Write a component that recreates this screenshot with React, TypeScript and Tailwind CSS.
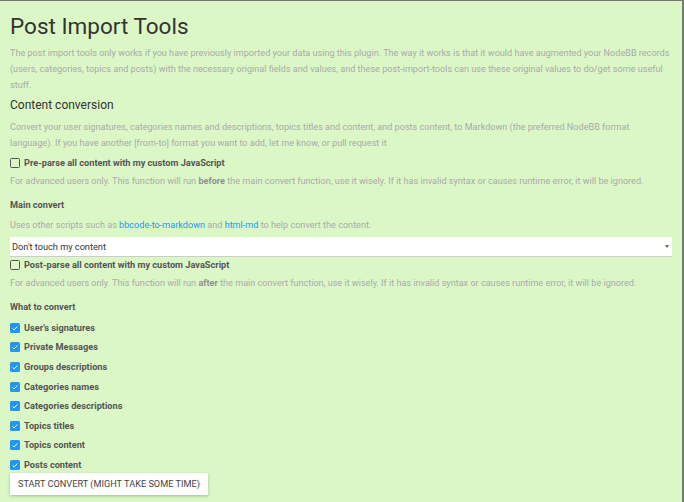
import React from 'react';

const options = [
  "User's signatures",
  'Private Messages',
  'Groups descriptions',
  'Categories names',
  'Categories descriptions',
  'Topics titles',
  'Topics content',
  'Posts content',
];

function Box({ checked }: { checked?: boolean }) {
  if (checked) {
    return (
      <span className="flex h-[10px] w-[10px] shrink-0 items-center justify-center rounded-[1.5px] bg-[#2196f3]">
        <svg width="8" height="8" viewBox="0 0 8 8" fill="none">
          <path d="M1.6 4.5 L3.2 5.9 L6.3 2.5" stroke="white" strokeWidth="1" />
        </svg>
      </span>
    );
  }
  return <span className="h-[10px] w-[10px] shrink-0 rounded-[1.5px] border border-[#555]" />;
}

function CheckRow({ label, checked, h = 'h-[19.6px]' }: { label: string; checked?: boolean; h?: string }) {
  return (
    <label className={`flex ${h} items-center gap-[4px] text-[9.2px] font-bold text-[#555]`}>
      <Box checked={checked} />
      <span>{label}</span>
    </label>
  );
}

export default function App() {
  return (
    <div
      className="h-[502px] w-[684px] overflow-hidden border-t border-r-2 border-[#777] bg-[#dbf7c6] pl-[10px] pr-[9px] pt-[10px]"
      style={{ fontFamily: 'Roboto, "Liberation Sans", sans-serif' }}
    >
      <h1 className="text-[22.5px] leading-[30px] text-[#333]">Post Import Tools</h1>
      <p className="mt-[4px] text-[9.1px] leading-[16px] text-[#aaa]">
        The post import tools only works if you have previously imported your data using this plugin. The way it works is that it would have augmented your NodeBB records (users, categories, topics and posts) with the necessary original fields and values, and these post-import-tools can use these original values to do/get some useful stuff.
      </p>
      <h2 className="mt-[2px] text-[12px] leading-[20px] text-[#333]">Content conversion</h2>
      <p className="mt-[4px] pr-[10px] text-[9.1px] leading-[16px] text-[#aaa]">
        Convert your user signatures, categories names and descriptions, topics titles and content, and posts content, to Markdown (the preferred NodeBB format language). If you have another [from-to] format you want to add, let me know, or pull request it
      </p>
      <div className="mt-[2px]">
        <CheckRow label="Pre-parse all content with my custom JavaScript" h="h-[20px]" />
      </div>
      <p className="text-[9.1px] leading-[16px] text-[#aaa]">
        For advanced users only. This function will run <b className="text-[#909090]">before</b> the main convert function, use it wisely. If it has invalid syntax or causes runtime error, it will be ignored.
      </p>
      <div className="mt-[8px] text-[9.2px] font-bold leading-[16px] text-[#555]">Main convert</div>
      <p className="mt-[4px] text-[9.1px] leading-[16px] text-[#aaa]">
        Uses other scripts such as <span className="text-[#2196f3]">bbcode-to-markdown</span> and{' '}
        <span className="text-[#2196f3]">html-md</span> to help convert the content.
      </p>
      <div className="mt-[4px] mr-[1px] flex h-[20px] items-center justify-between border-b border-[#ccc] bg-white pl-[2px] pr-[3px] text-[9.2px] text-[#333]">
        <span>Don't touch my content</span>
        <svg width="4" height="3" viewBox="0 0 4 3">
          <path d="M0 0 H4 L2 3 Z" fill="#666" />
        </svg>
      </div>
      <div className="mt-[-1px]">
        <CheckRow label="Post-parse all content with my custom JavaScript" h="h-[18px]" />
      </div>
      <p className="mt-[1px] text-[9.1px] leading-[16px] text-[#aaa]">
        For advanced users only. This function will run <b className="text-[#909090]">after</b> the main convert function, use it wisely. If it has invalid syntax or causes runtime error, it will be ignored.
      </p>
      <div className="mt-[8px] text-[9.2px] font-bold leading-[16px] text-[#555]">What to convert</div>
      <div className="mt-[3px] flex flex-col">
        {options.map((o) => (
          <CheckRow key={o} label={o} checked />
        ))}
      </div>
      <button className="mt-[-2px] block h-[22px] bg-white px-[8px] text-[9.2px] uppercase text-[#444] shadow-[0_1px_3px_rgba(0,0,0,0.25)]">
        Start convert (might take some time)
      </button>
    </div>
  );
}
